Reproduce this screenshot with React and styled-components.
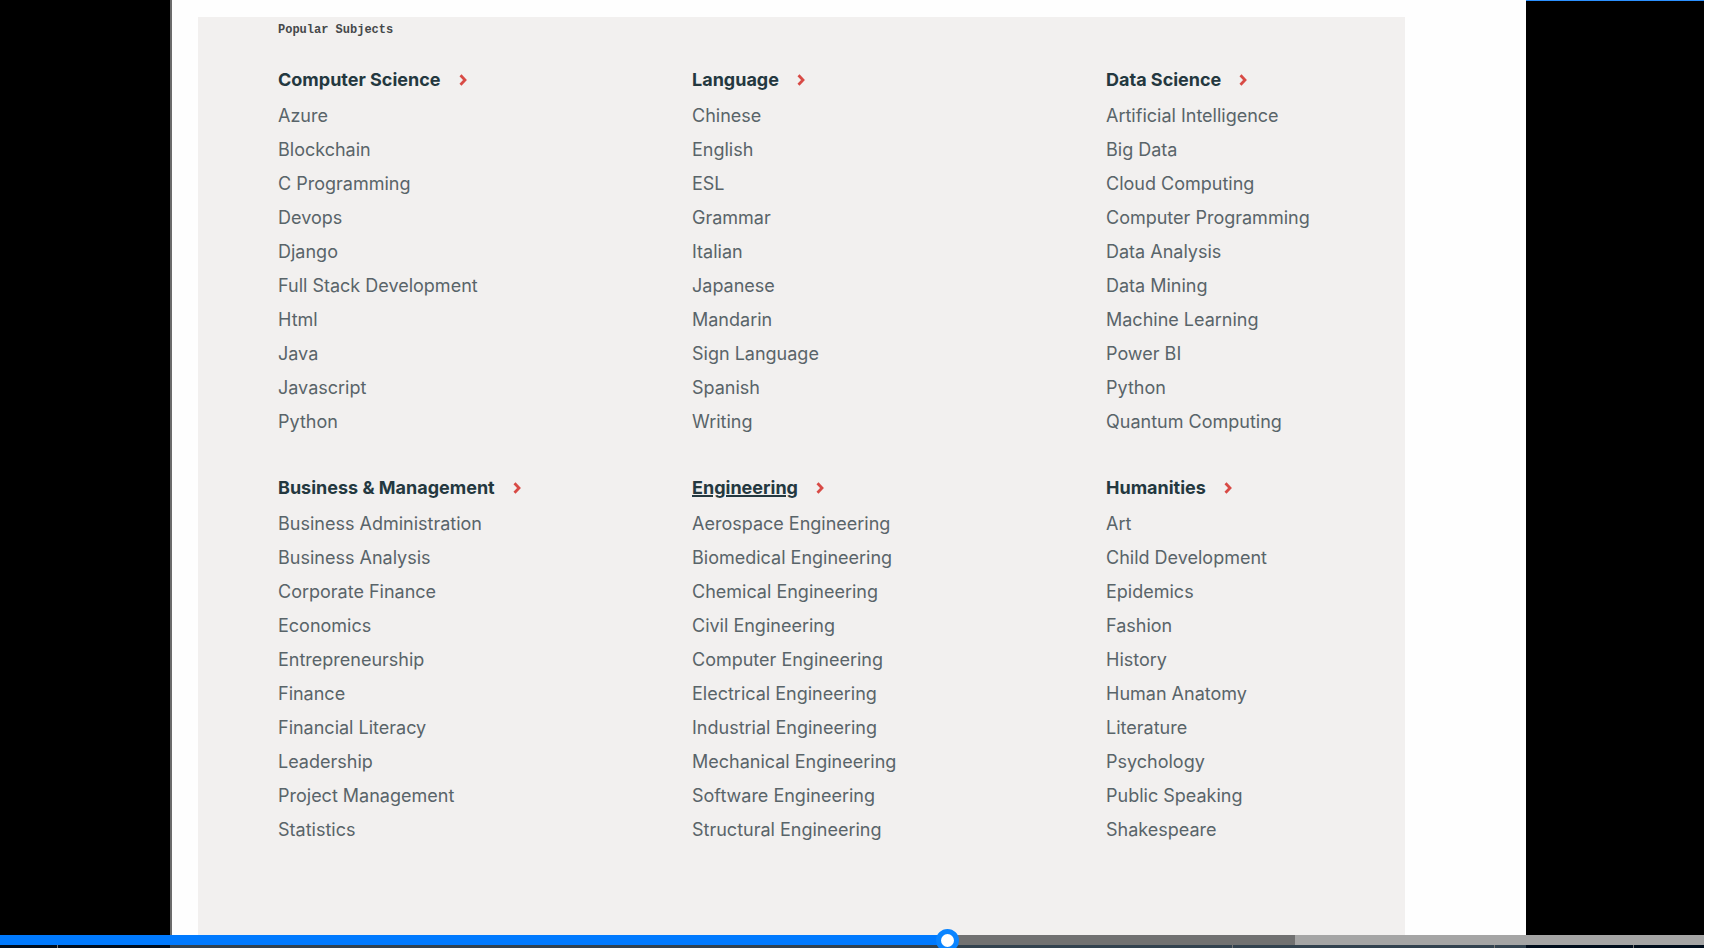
import React, { useState } from "react";
import styled, { createGlobalStyle } from "styled-components";

const GlobalStyle = createGlobalStyle`
  * { box-sizing: border-box; }
  html, body { margin: 0; background: #fff; overflow: hidden; }
  body { font-family: Inter, "Liberation Sans", sans-serif; }
`;

const Player = styled.div`
  display: flex;
  flex-direction: column;
  min-height: 100vh;
  margin-right: 14px;
  overflow: hidden;
`;

const Frame = styled.main`
  flex: 1;
  display: grid;
  grid-template-columns: 172px minmax(0, 1fr) 178px;
`;

const Letterbox = styled.div`
  background: #000;
  border-right: ${(p) => (p.$soft ? "2px solid #6c6c6c" : "none")};
  border-top: ${(p) => (p.$lit ? "1px solid #2b90ff" : "none")};
`;

const Page = styled.div`
  display: flex;
  background: #fefefe;
  padding: 17px 121px 0 26px;
`;

const Card = styled.section`
  flex: 1;
  min-width: 0;
  background: #f2f0ef;
  padding: 5px 40px 40px 80px;
`;

const Label = styled.h2`
  margin: 0 0 24px;
  font: 700 12px/16px "Liberation Mono", monospace;
  color: #45484a;
`;

const Grid = styled.div`
  display: grid;
  grid-template-columns: repeat(3, minmax(0, 1fr));
  gap: 31px 155px;
`;

const Group = styled.div`
  white-space: nowrap;
`;

const GroupTitle = styled.h3`
  display: flex;
  align-items: center;
  gap: 18px;
  height: 35px;
  margin: 0 0 2px;
  font-size: 18px;
  line-height: 24px;
  font-weight: 700;
`;

const TitleLink = styled.a`
  color: #24383f;
  text-decoration: ${(p) => (p.$active ? "underline" : "none")};
  text-decoration-thickness: 2px;
`;

const List = styled.ul`
  list-style: none;
  margin: 0;
  padding: 0;
`;

const Item = styled.li`
  height: 34px;
  font-size: 18px;
  line-height: 34px;
`;

const SubjectLink = styled.a`
  color: #596469;
  text-decoration: none;
`;

const Seek = styled.input`
  appearance: none;
  display: block;
  position: relative;
  z-index: 1;
  width: 100%;
  height: 10px;
  margin: 0;
  outline: none;
  cursor: pointer;
  background: linear-gradient(
    to right,
    #007aff 0 var(--played),
    #717171 var(--played) var(--buffered),
    #a5a5a5 var(--buffered) 100%
  );

  &::-webkit-slider-thumb {
    appearance: none;
    width: 23px;
    height: 23px;
    border: 5px solid #0a84ff;
    border-radius: 50%;
    background: #fff;
  }
`;

const Chapters = styled.div`
  display: grid;
  grid-template-columns: 58fr 1175fr 262fr 139fr 70fr;
  height: 3px;
  background: linear-gradient(
    to right,
    #000d1c 0 170px,
    #32424f 170px calc(100% - 178px),
    #000d1c calc(100% - 178px) 100%
  );
`;

const Chapter = styled.span`
  border-right: ${(p) => (p.$last ? "none" : "1px solid #747474")};
`;

const Chevron = () => (
  <svg width="8" height="12" viewBox="0 0 8 12" fill="none" aria-hidden="true">
    <path d="M1.5 1.2 L6 6 L1.5 10.8" stroke="#d84a45" strokeWidth="2.8" />
  </svg>
);

const groups = [
  ["Computer Science", ["Azure", "Blockchain", "C Programming", "Devops", "Django", "Full Stack Development", "Html", "Java", "Javascript", "Python"]],
  ["Language", ["Chinese", "English", "ESL", "Grammar", "Italian", "Japanese", "Mandarin", "Sign Language", "Spanish", "Writing"]],
  ["Data Science", ["Artificial Intelligence", "Big Data", "Cloud Computing", "Computer Programming", "Data Analysis", "Data Mining", "Machine Learning", "Power BI", "Python", "Quantum Computing"]],
  ["Business & Management", ["Business Administration", "Business Analysis", "Corporate Finance", "Economics", "Entrepreneurship", "Finance", "Financial Literacy", "Leadership", "Project Management", "Statistics"]],
  ["Engineering", ["Aerospace Engineering", "Biomedical Engineering", "Chemical Engineering", "Civil Engineering", "Computer Engineering", "Electrical Engineering", "Industrial Engineering", "Mechanical Engineering", "Software Engineering", "Structural Engineering"]],
  ["Humanities", ["Art", "Child Development", "Epidemics", "Fashion", "History", "Human Anatomy", "Literature", "Psychology", "Public Speaking", "Shakespeare"]],
];

export default function App() {
  const [position, setPosition] = useState(557);
  return (
    <>
      <GlobalStyle />
      <Player>
        <Frame>
          <Letterbox $soft />
          <Page>
            <Card>
              <Label>Popular Subjects</Label>
              <Grid>
                {groups.map(([title, subjects]) => (
                  <Group key={title}>
                    <GroupTitle>
                      <TitleLink href="#" $active={title === "Engineering"}>{title}</TitleLink>
                      <Chevron />
                    </GroupTitle>
                    <List>
                      {subjects.map((subject) => (
                        <Item key={subject}>
                          <SubjectLink href="#">{subject}</SubjectLink>
                        </Item>
                      ))}
                    </List>
                  </Group>
                ))}
              </Grid>
            </Card>
          </Page>
          <Letterbox $lit />
        </Frame>
        <Seek
          type="range"
          aria-label="Seek"
          min="0"
          max="1000"
          value={position}
          onChange={(e) => setPosition(Number(e.target.value))}
          style={{ "--played": `${position / 10}%`, "--buffered": "76%" }}
        />
        <Chapters>
          <Chapter />
          <Chapter />
          <Chapter />
          <Chapter />
          <Chapter $last />
        </Chapters>
      </Player>
    </>
  );
}
